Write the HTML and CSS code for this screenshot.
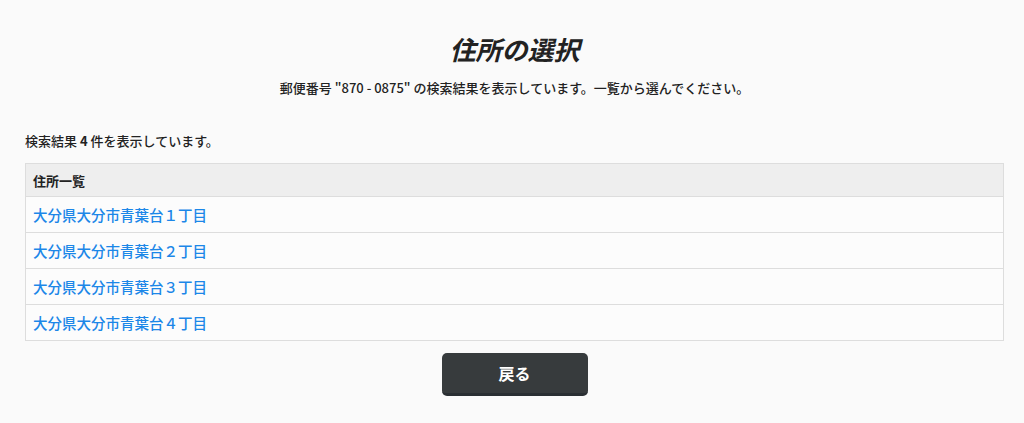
FILE: index.html
```html
<!DOCTYPE html>
<html lang="ja">
<head>
<meta charset="utf-8">
<title>住所の選択</title>
<link rel="stylesheet" href="styles.css">
</head>
<body>
<main class="page">
  <header class="page-head">
    <h1 class="page-title">住所の選択</h1>
    <p class="page-lead">郵便番号 "870 - 0875" の検索結果を表示しています。一覧から選んでください。</p>
  </header>

  <p class="result-count">検索結果 <strong>4</strong> 件を表示しています。</p>

  <table class="address-table">
    <thead>
      <tr><th>住所一覧</th></tr>
    </thead>
    <tbody>
      <tr><td><a href="#">大分県大分市青葉台１丁目</a></td></tr>
      <tr><td><a href="#">大分県大分市青葉台２丁目</a></td></tr>
      <tr><td><a href="#">大分県大分市青葉台３丁目</a></td></tr>
      <tr><td><a href="#">大分県大分市青葉台４丁目</a></td></tr>
    </tbody>
  </table>

  <div class="actions">
    <button type="button" class="btn-back">戻る</button>
  </div>
</main>
</body>
</html>
```

FILE: styles.css
```css
html, body {
  margin: 0;
  padding: 0;
  background: #fafafa;
}

body {
  font-family: "Noto Sans CJK JP", "Noto Sans", sans-serif;
  color: #222;
  font-size: 13px;
  font-weight: 500;
}

.page {
  padding: 0 20px 0 25px;
}

.page-head {
  text-align: center;
  padding-top: 32px;
}

.page-title {
  margin: 0;
  font-size: 26px;
  font-weight: bold;
  font-style: italic;
  line-height: 34px;
}

.page-lead {
  margin: 12px 0 0;
  font-size: 13px;
  line-height: 20px;
}

.result-count {
  margin: 33px 0 0;
  line-height: 20px;
}

.result-count strong {
  font-weight: bold;
}

.address-table {
  width: 100%;
  margin-top: 12px;
  border-collapse: collapse;
  border: 1px solid #ddd;
}

.address-table th {
  background: #eee;
  text-align: left;
  font-weight: bold;
  font-size: 13px;
  height: 32px;
  padding: 0 7px;
  border-bottom: 1px solid #ddd;
}

.address-table td {
  background: #fcfcfc;
  height: 35px;
  padding: 0 7px;
  border-top: 1px solid #ddd;
}

.address-table a {
  color: #1c87e8;
  text-decoration: none;
  font-size: 14.5px;
  font-weight: 500;
}

.actions {
  display: flex;
  justify-content: center;
  padding-top: 12px;
}

.btn-back {
  width: 146px;
  height: 43px;
  border: 0;
  border-bottom: 3px solid #2a2f33;
  border-radius: 5px;
  background: #373b3d;
  color: #fff;
  font-family: inherit;
  font-size: 16px;
  font-weight: bold;
  cursor: pointer;
}
```
